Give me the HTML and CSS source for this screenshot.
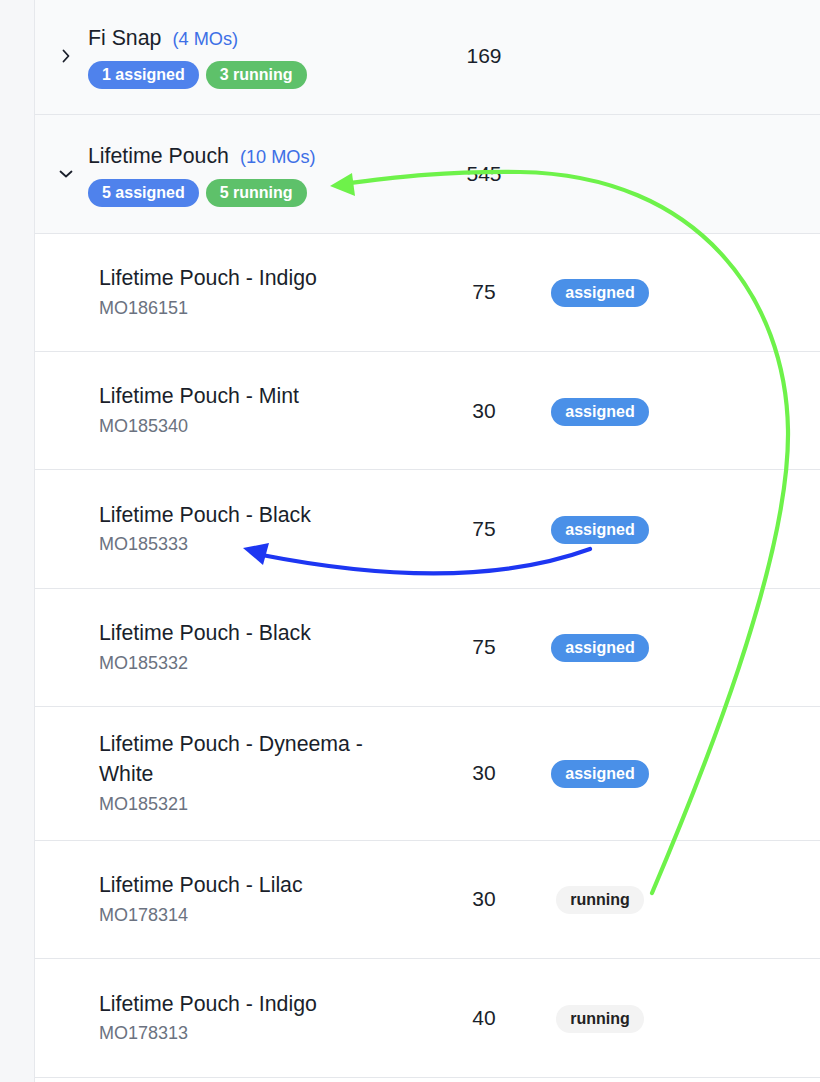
FILE: index.html
```html
<!DOCTYPE html>
<html>
<head>
<meta charset="utf-8">
<link rel="stylesheet" href="styles.css">
</head>
<body>
<div class="page">
  <aside class="sidebar"></aside>
  <main class="table">
    <div class="row group">
      <div class="cell name">
        <span class="chev"><svg width="10" height="14" viewBox="0 0 10 14"><path d="M2.5 1.5 L7.5 7 L2.5 12.5" fill="none" stroke="#1a1f2b" stroke-width="1.8" stroke-linecap="round" stroke-linejoin="round"/></svg></span>
        <div class="gtext">
          <div class="gtitle">Fi Snap<span class="count">(4 MOs)</span></div>
          <div class="badges"><span class="badge b-blue">1 assigned</span><span class="badge b-green">3 running</span></div>
        </div>
      </div>
      <div class="cell qty">169</div>
      <div class="cell status"></div>
    </div>
    <div class="row group">
      <div class="cell name">
        <span class="chev"><svg width="14" height="10" viewBox="0 0 14 10"><path d="M1.5 2.5 L7 7.5 L12.5 2.5" fill="none" stroke="#1a1f2b" stroke-width="1.8" stroke-linecap="round" stroke-linejoin="round"/></svg></span>
        <div class="gtext">
          <div class="gtitle">Lifetime Pouch<span class="count">(10 MOs)</span></div>
          <div class="badges"><span class="badge b-blue">5 assigned</span><span class="badge b-green">5 running</span></div>
        </div>
      </div>
      <div class="cell qty">545</div>
      <div class="cell status"></div>
    </div>
    <div class="row item">
      <div class="cell name"><div class="title">Lifetime Pouch - Indigo</div><div class="mo">MO186151</div></div>
      <div class="cell qty">75</div>
      <div class="cell status"><span class="pill assigned">assigned</span></div>
    </div>
    <div class="row item">
      <div class="cell name"><div class="title">Lifetime Pouch - Mint</div><div class="mo">MO185340</div></div>
      <div class="cell qty">30</div>
      <div class="cell status"><span class="pill assigned">assigned</span></div>
    </div>
    <div class="row item">
      <div class="cell name"><div class="title">Lifetime Pouch - Black</div><div class="mo">MO185333</div></div>
      <div class="cell qty">75</div>
      <div class="cell status"><span class="pill assigned">assigned</span></div>
    </div>
    <div class="row item">
      <div class="cell name"><div class="title">Lifetime Pouch - Black</div><div class="mo">MO185332</div></div>
      <div class="cell qty">75</div>
      <div class="cell status"><span class="pill assigned">assigned</span></div>
    </div>
    <div class="row item">
      <div class="cell name"><div class="title">Lifetime Pouch - Dyneema - White</div><div class="mo">MO185321</div></div>
      <div class="cell qty">30</div>
      <div class="cell status"><span class="pill assigned">assigned</span></div>
    </div>
    <div class="row item">
      <div class="cell name"><div class="title">Lifetime Pouch - Lilac</div><div class="mo">MO178314</div></div>
      <div class="cell qty">30</div>
      <div class="cell status"><span class="pill running">running</span></div>
    </div>
    <div class="row item">
      <div class="cell name"><div class="title">Lifetime Pouch - Indigo</div><div class="mo">MO178313</div></div>
      <div class="cell qty">40</div>
      <div class="cell status"><span class="pill running">running</span></div>
    </div>
  </main>
  <svg class="annotations" width="820" height="1082" viewBox="0 0 820 1082">
    <path d="M652 893 C700 780 790 560 788 430 C786 300 700 175 520 172 C440 171 390 178 350 183" fill="none" stroke="#6ef24a" stroke-width="4.2" stroke-linecap="round"/>
    <polygon points="330,186 352,173 355,196" fill="#6ef24a"/>
    <path d="M590 549 C510 578 400 582 262 555" fill="none" stroke="#1d36f2" stroke-width="4.2" stroke-linecap="round"/>
    <polygon points="243,548 269,543 263,565" fill="#1d36f2"/>
  </svg>
</div>
</body>
</html>
```
FILE: styles.css
```css
html, body {
  margin: 0;
  padding: 0;
  background: #ffffff;
}
body {
  font-family: "Liberation Sans", Arial, sans-serif;
  color: #1a1f2b;
  overflow: hidden;
}
.page {
  position: relative;
  display: flex;
  width: 820px;
  height: 1082px;
  overflow: hidden;
}
.sidebar {
  flex: 0 0 34px;
  background: #f6f7f9;
  border-right: 1px solid #e6e8ec;
}
.table {
  flex: 1;
  margin-top: -3.2px;
  display: flex;
  flex-direction: column;
}
.row {
  display: grid;
  grid-template-columns: 399px 100px 132px 1fr;
  align-items: center;
  box-sizing: border-box;
  min-height: 118.4px;
  border-bottom: 1px solid #e5e7eb;
}
.group {
  background: #f9fafb;
}
.item {
  background: #ffffff;
  padding: 21.8px 0;
}
.cell.name {
  box-sizing: border-box;
  padding-right: 34px;
}
.group .cell.name {
  display: flex;
  align-items: center;
  padding-left: 17px;
}
.chev {
  width: 28px;
  display: flex;
  justify-content: center;
  align-items: center;
  margin-right: 8px;
}
.gtext {
  display: flex;
  flex-direction: column;
  gap: 7px;
}
.gtitle {
  font-size: 21.3px;
  line-height: 30px;
  white-space: nowrap;
}
.count {
  font-size: 18.2px;
  color: #3d6fe6;
  margin-left: 11px;
}
.badges {
  display: flex;
  gap: 7px;
}
.badge, .pill {
  display: inline-block;
  height: 28px;
  line-height: 28px;
  padding: 0 14px;
  border-radius: 14px;
  font-size: 16px;
  font-weight: bold;
  white-space: nowrap;
}
.b-blue {
  background: #4f82ec;
  color: #ffffff;
}
.b-green {
  background: #5ec16a;
  color: #ffffff;
}
.item .cell.name {
  padding-left: 64px;
}
.title {
  font-size: 21.3px;
  line-height: 30.5px;
}
.mo {
  font-size: 18px;
  line-height: 28px;
  color: #6b7280;
}
.qty {
  font-size: 21px;
  text-align: center;
}
.status {
  display: flex;
  justify-content: center;
  padding-top: 2px;
}
.pill.assigned {
  background: #4a90e8;
  color: #ffffff;
}
.pill.running {
  background: #f3f3f3;
  color: #222222;
}
.annotations {
  position: absolute;
  left: 0;
  top: 0;
  pointer-events: none;
}
```
